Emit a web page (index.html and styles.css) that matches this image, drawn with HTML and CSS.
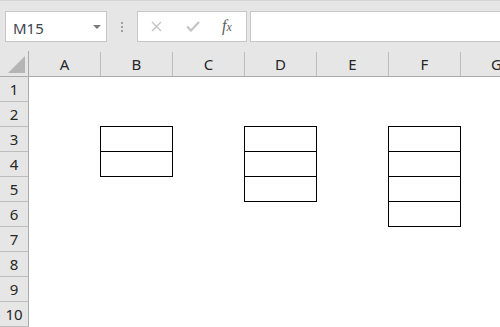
FILE: index.html
```html
<!DOCTYPE html>
<html lang="en">
<head>
    <meta charset="UTF-8">
    <title>Sheet</title>
    <link rel="stylesheet" href="styles.css">
</head>
<body>
    <div class="toolbar">
        <div class="name-box">
            <span class="name">M15</span>
            <span class="caret"></span>
        </div>
        <div class="grip"><i></i><i></i><i></i></div>
        <div class="fx-box">
            <svg class="icon-cancel" width="11" height="11" viewBox="0 0 11 11">
                <path d="M1 1 L10 10 M10 1 L1 10" stroke="#c3c3c3" stroke-width="1.4" fill="none"/>
            </svg>
            <svg class="icon-enter" width="14" height="11" viewBox="0 0 14 11">
                <path d="M1 5.5 L5 9.5 L13 1" stroke="#c3c3c3" stroke-width="2.2" fill="none"/>
            </svg>
            <span class="fx">f<span>x</span></span>
        </div>
        <div class="formula"></div>
    </div>

    <div class="sheet">
        <div class="row head-row">
            <div class="corner"><span class="corner-mark"></span></div>
            <div class="col-head">A</div>
            <div class="col-head">B</div>
            <div class="col-head">C</div>
            <div class="col-head">D</div>
            <div class="col-head">E</div>
            <div class="col-head">F</div>
            <div class="col-head">G</div>
        </div>
        <div id="rows"></div>
    </div>

    <script>
        // ячейки с рамкой: строка -> колонки
        const boxed = {
            3: ['B', 'D', 'F'],
            4: ['B', 'D', 'F'],
            5: ['D', 'F'],
            6: ['F']
        };
        const cols = ['A', 'B', 'C', 'D', 'E', 'F', 'G'];
        const rows = document.getElementById('rows');

        for (let r = 1; r <= 10; r++) {
            const row = document.createElement('div');
            row.className = 'row';

            const head = document.createElement('div');
            head.className = 'row-head';
            head.textContent = r;
            row.appendChild(head);

            cols.forEach(c => {
                const cell = document.createElement('div');
                cell.className = 'cell';
                if (boxed[r] && boxed[r].includes(c)) {
                    cell.classList.add('boxed');
                }
                row.appendChild(cell);
            });

            rows.appendChild(row);
        }
    </script>
</body>
</html>
```

FILE: styles.css
```css
:root {
    --bar-bg: #e6e6e6;
    --line: #c6c6c6;
    --head-line: #bdbdbd;
    --head-edge: #ababab;
    --text: #262626;
}

* {
    margin: 0;
    padding: 0;
    box-sizing: border-box;
}

body {
    width: 500px;
    height: 327px;
    overflow: hidden;
    background: #ffffff;
    font-family: 'Noto Sans', 'Liberation Sans', sans-serif;
    color: var(--text);
}

.toolbar {
    height: 51px;
    background: var(--bar-bg);
    border-top: 1px solid #d6d6d6;
    padding-top: 10px;
    display: flex;
    align-items: flex-start;
    white-space: nowrap;
}

.name-box {
    margin-left: 5px;
    width: 102px;
    height: 31px;
    background: #ffffff;
    border: 1px solid var(--line);
    display: flex;
    align-items: center;
    padding-left: 7px;
    padding-top: 3px;
}

.name {
    flex: 1;
    font-size: 15px;
    color: #3e4552;
}

.caret {
    width: 0;
    height: 0;
    border-left: 4px solid transparent;
    border-right: 4px solid transparent;
    border-top: 4px solid #7a7a7a;
    margin-right: 5px;
    margin-top: -3px;
}

.grip {
    width: 30px;
    height: 31px;
    display: flex;
    flex-direction: column;
    align-items: center;
    justify-content: center;
    gap: 2px;
}

.grip i {
    display: block;
    width: 2px;
    height: 2px;
    background: #a0a0a0;
}

.fx-box {
    width: 110px;
    height: 31px;
    background: #ffffff;
    border: 1px solid var(--line);
    display: flex;
    align-items: center;
    padding-left: 13px;
}

.icon-enter {
    margin-left: 24px;
}

.fx {
    margin-left: 22px;
    margin-top: -2px;
    font-family: 'Liberation Serif', serif;
    font-style: italic;
    font-size: 16px;
    color: #5c5c5c;
}

.fx span {
    font-size: 12px;
}

.formula {
    margin-left: 3px;
    flex: 1;
    height: 31px;
    background: #ffffff;
    border: 1px solid var(--line);
    border-right: none;
}

.row {
    display: flex;
    height: 25px;
}

.head-row {
    height: 26px;
    background: var(--bar-bg);
    border-bottom: 1px solid var(--head-edge);
}

.corner {
    flex: 0 0 29px;
    border-right: 1px solid var(--head-edge);
    display: flex;
    justify-content: flex-end;
    align-items: flex-end;
    padding: 0 3px 3px 0;
}

.corner-mark {
    width: 17px;
    height: 17px;
    background: #b5b5b5;
    clip-path: polygon(100% 0, 100% 100%, 0 100%);
}

.col-head {
    flex: 0 0 72px;
    border-right: 1px solid var(--head-line);
    display: flex;
    align-items: center;
    justify-content: center;
    font-size: 15px;
    margin-top: 1px;
}

.row-head {
    flex: 0 0 29px;
    background: var(--bar-bg);
    border-right: 1px solid var(--head-edge);
    border-bottom: 1px solid var(--head-line);
    display: flex;
    align-items: center;
    justify-content: center;
    font-size: 15px;
}

.cell {
    flex: 0 0 72px;
    height: 25px;
}

/* рамка рисуется по линиям сетки, как в Excel */
.cell.boxed {
    flex-basis: 73px;
    height: 26px;
    margin: -1px 0 0 -1px;
    border: 1px solid #000000;
}
```
